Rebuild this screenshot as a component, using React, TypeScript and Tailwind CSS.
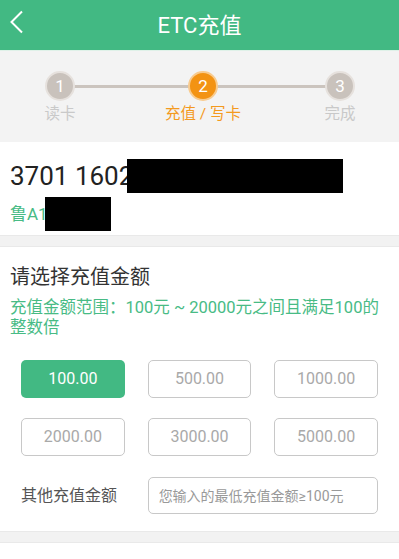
const font = { fontFamily: 'Roboto, "Noto Sans CJK SC", sans-serif' };

const amounts = ['100.00', '500.00', '1000.00', '2000.00', '3000.00', '5000.00'];

function Step({ n, label, active, className }: { n: number; label: string; active?: boolean; className?: string }) {
  return (
    <div className={`relative z-10 flex w-[30px] flex-col items-center ${className ?? ''}`}>
      <div
        className={`flex h-[30px] w-[30px] items-center justify-center rounded-full border-2 ${
          active ? 'border-[#f8cb8f] bg-[#f39313]' : 'border-[#e6e1dd] bg-[#c9c2bc]'
        }`}
      >
        <span className="text-[17px] leading-none text-white">{n}</span>
      </div>
      <span
        className={`mt-[3px] whitespace-nowrap text-[15.5px] leading-[20px] ${
          active ? 'text-[#f39a1e]' : 'text-[#c9c9c9]'
        }`}
      >
        {label}
      </span>
    </div>
  );
}

export default function App() {
  return (
    <div className="min-h-[559px] w-[399px] bg-white" style={font}>
      {/* Header */}
      <div className="relative flex h-[50px] items-center justify-center bg-[#42b983]">
        <svg className="absolute left-[9px] top-[10px]" width="16" height="24" viewBox="0 0 16 24" fill="none">
          <path d="M13 1.5 L2.5 12 L13 22.5" stroke="white" strokeWidth="2" />
        </svg>
        <span className="text-[22px] text-white">ETC充值</span>
      </div>
      <div className="h-px bg-[#dff1e8]" />

      {/* Steps */}
      <div className="relative h-[91px] bg-[#f3f3f3] pt-[20px]">
        <div className="absolute left-[60px] top-[34px] h-[3px] w-[280px] bg-[#cbc4be]" />
        <div className="flex">
          <Step n={1} label="读卡" className="ml-[45px]" />
          <Step n={2} label="充值 / 写卡" active className="ml-[113px]" />
          <Step n={3} label="完成" className="ml-[107px]" />
        </div>
      </div>

      {/* Card info */}
      <div className="bg-white px-[10px] pb-[4px] pt-[17px]">
        <div className="flex items-center">
          <span className="text-[26px] leading-[32px] text-[#222]">3701 1602</span>
          <div className="ml-[-6px] h-[34px] w-[216px] bg-black" />
        </div>
        <div className="mt-[4px] flex items-center">
          <span className="text-[17px] leading-[22px] text-[#48bb85]">鲁A1</span>
          <div className="ml-[-3px] h-[34px] w-[66px] bg-black" />
        </div>
      </div>

      <div className="h-[12px] border-y border-[#e9e9e9] bg-[#f2f2f2]" />

      {/* Amount */}
      <div className="bg-white pb-[17px] pt-[17px]">
        <div className="px-[10px]">
          <div className="text-[20px] leading-[26px] text-[#333]">请选择充值金额</div>
          <div className="mt-[8px] text-[16.5px] leading-[20px] text-[#48bb85]">
            充值金额范围：100元 ~ 20000元之间且满足100的整数倍
          </div>
        </div>

        <div className="mt-[22px] grid grid-cols-3 gap-x-[23px] gap-y-[20px] px-[21px]">
          {amounts.map((a, i) => (
            <button
              key={a}
              className={`h-[38px] rounded-[5px] text-[16px] ${
                i === 0 ? 'bg-[#42b983] text-white' : 'border border-[#c8c8c8] bg-white text-[#a9a9a9]'
              }`}
            >
              {a}
            </button>
          ))}
        </div>

        <div className="mt-[21px] flex items-center px-[21px]">
          <span className="w-[127px] text-[16px] text-[#555]">其他充值金额</span>
          <input
            className="h-[37px] w-[231px] rounded-[5px] border border-[#c8c8c8] px-[10px] text-[14px] text-[#333] placeholder:text-[#999] outline-none"
            placeholder="您输入的最低充值金额≥100元"
          />
        </div>
      </div>

      <div className="h-[12px] border-y border-[#e9e9e9] bg-[#f2f2f2]" />
    </div>
  );
}
